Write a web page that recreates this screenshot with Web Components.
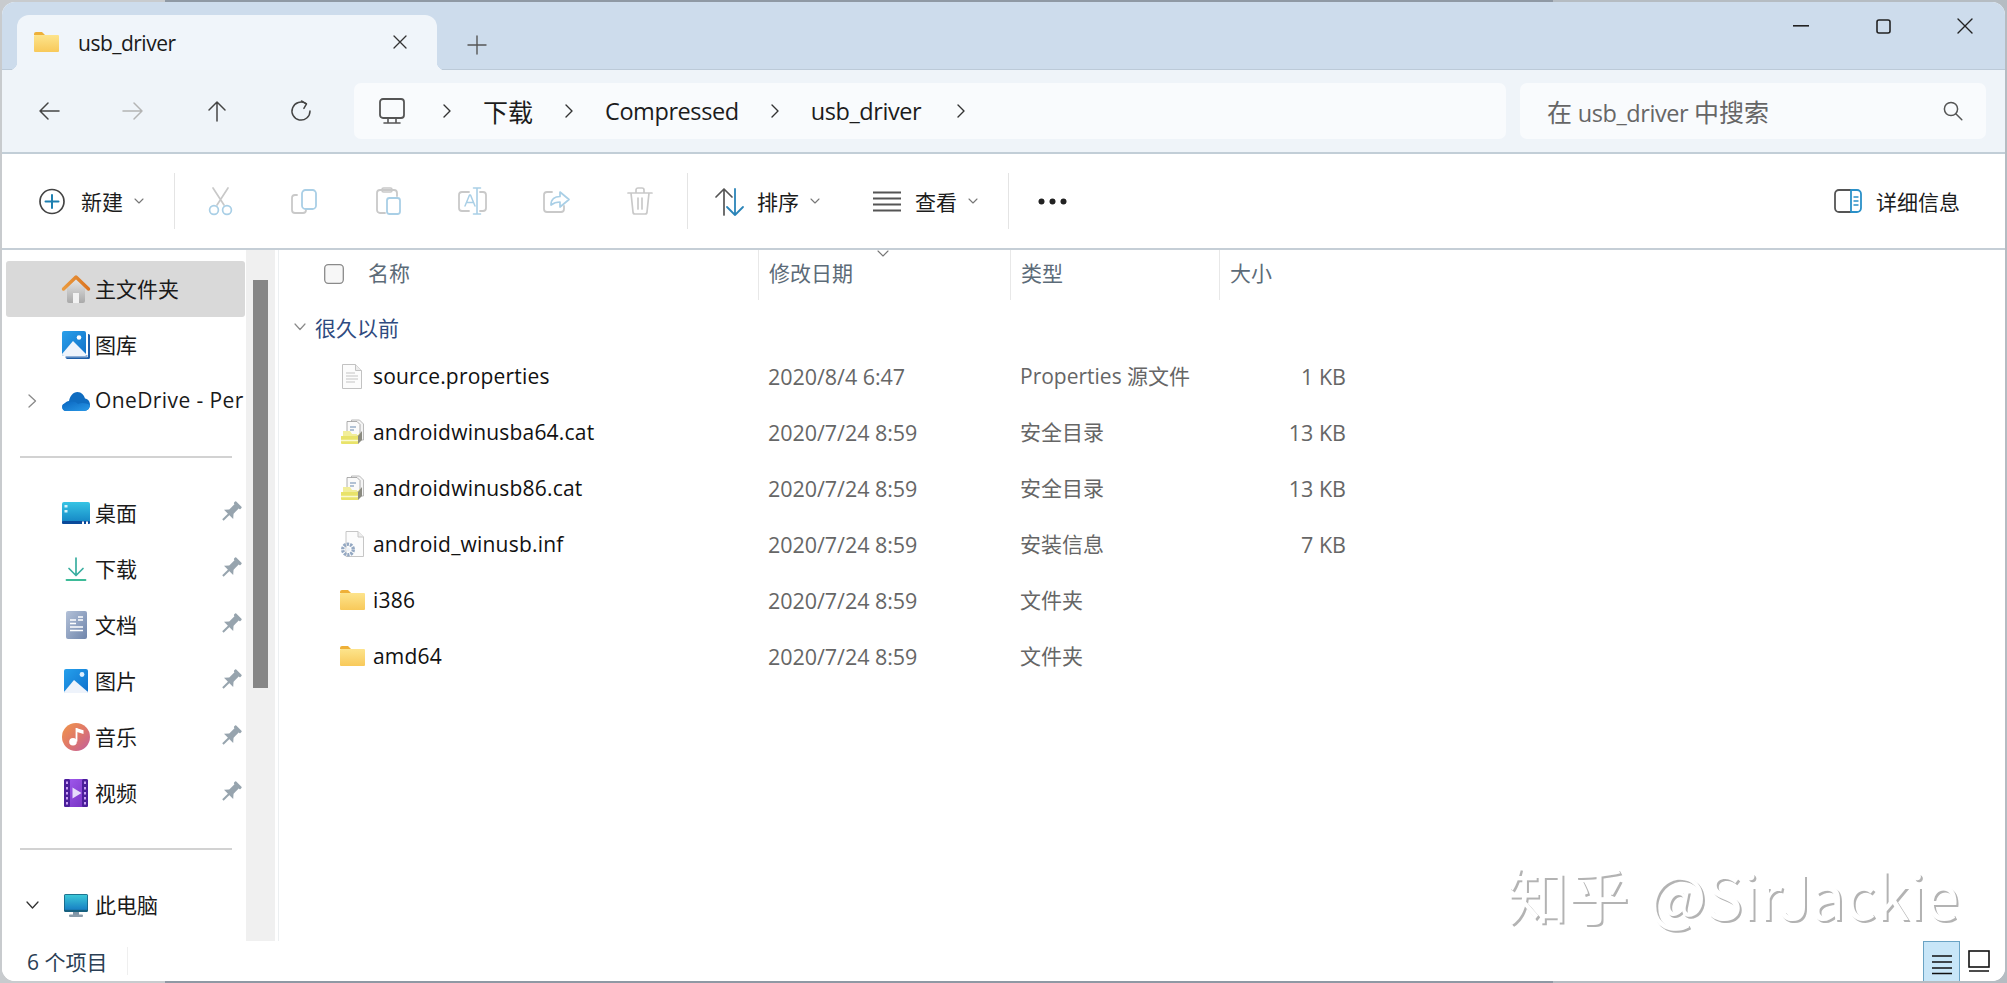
<!DOCTYPE html>
<html lang="zh-CN"><head><meta charset="utf-8"><title>usb_driver</title>
<style>
html,body{margin:0;padding:0;height:100%;overflow:hidden}
body{width:2007px;height:983px;box-sizing:border-box;padding:2px 2px 2px 2px;
background:linear-gradient(90deg,#c8cbce 0,#c8cbce 165px,#8f99a4 165px,#8f99a4 1553px,#b5bcc2 1553px);
font-family:"Open Sans","Noto Sans CJK SC",sans-serif;color:#1a1a1a}
</style></head><body>
<explorer-window>
  <tab-strip></tab-strip>
  <nav-bar></nav-bar>
  <tool-bar></tool-bar>
  <side-pane slot="body-left"></side-pane>
  <file-view slot="body-right"></file-view>
  <status-bar slot="status"></status-bar>
</explorer-window>
<script>
const stroke=(c,w)=>`fill="none" stroke="${c}" stroke-width="${w}" stroke-linecap="round" stroke-linejoin="round"`;
const G='#c9c9c9',B='#a9cfe6';
const ICONS={
folder:[25,20,`<defs><linearGradient id="f" x1="0" y1="0" x2="0" y2="1"><stop offset="0" stop-color="#fde48c"/><stop offset="1" stop-color="#f8c95a"/></linearGradient></defs><path d="M0 2a2 2 0 0 1 2-2h6l3 3h-11z" fill="#eeb038"/><rect y="3" width="25" height="17" rx="1" fill="url(#f)"/>`],
back:[22,20,`<path d="M21 10H2M10 2l-8 8 8 8" ${stroke('#444',1.5)}/>`],
forward:[22,20,`<path d="M1 10h19M12 2l8 8-8 8" ${stroke('#b4b4b4',1.5)}/>`],
up:[20,22,`<path d="M10 21V2M2 10l8-8 8 8" ${stroke('#444',1.5)}/>`],
refresh:[22,22,`<path d="M16 3.6A9 9 0 1 0 20 11" ${stroke('#444',1.5)}/><path d="M11.5 1l5 2.8-2.6 4.6" ${stroke('#444',1.5)}/>`],
monitor:[26,26,`<rect x="1" y="1" width="24" height="19" rx="3" ${stroke('#555',1.8)}/><path d="M9 20v4M17 20v4M5 25h16" ${stroke('#555',1.6)}/>`],
chev:[10,14,`<path d="M2 1l6 6-6 6" ${stroke('#333',1.4)}/>`],
search:[20,20,`<circle cx="8" cy="8" r="6.6" ${stroke('#555',1.5)}/><path d="M12.8 12.8l6 6" ${stroke('#555',1.5)}/>`],
min:[16,2,`<rect width="16" height="1.6" fill="#222"/>`],
max:[15,15,`<rect x="1" y="1" width="13" height="13" rx="2" ${stroke('#222',1.6)}/>`],
close:[16,16,`<path d="M1 1l14 14M15 1L1 15" ${stroke('#222',1.4)}/>`],
tabclose:[14,14,`<path d="M1 1l12 12M13 1L1 13" ${stroke('#333',1.3)}/>`],
plus:[18,18,`<path d="M9 0v18M0 9h18" ${stroke('#555',1.4)}/>`],
newc:[26,27,`<circle cx="13" cy="13.5" r="12" ${stroke('#444',1.7)}/><path d="M13 7v13M6.5 13.5h13" ${stroke('#1d7fb0',2)}/>`],
caret:[10,6,`<path d="M1 1l4 4 4-4" ${stroke('#777',1.1)}/>`],
cut:[25,28,`<path d="M5 1l11 17M20 1L9 18" ${stroke(G,1.7)}/><circle cx="6" cy="23" r="4.4" ${stroke(B,1.7)}/><circle cx="19" cy="23" r="4.4" ${stroke(B,1.7)}/>`],
copy:[26,25,`<path d="M6 6H4a3 3 0 0 0-3 3v12a3 3 0 0 0 3 3h8a3 3 0 0 0 3-3v-1" ${stroke(G,1.8)}/><rect x="11" y="1" width="14" height="19" rx="3.5" ${stroke(B,1.8)}/>`],
paste:[25,28,`<path d="M9 26H4a3 3 0 0 1-3-3V6a3 3 0 0 1 3-3h14a3 3 0 0 1 3 3v3" ${stroke(G,1.8)}/><rect x="6" y="1" width="10" height="4" rx="1.5" ${stroke(G,1.6)}/><rect x="11" y="11" width="13" height="16" rx="2.5" ${stroke(B,1.8)}/>`],
rename:[29,28,`<path d="M11 5H4a3 3 0 0 0-3 3v13a3 3 0 0 0 3 3h7M22 5h3a3 3 0 0 1 3 3v13a3 3 0 0 1-3 3h-3" ${stroke(G,1.8)}/><path d="M7 19l4.5-11h1L17 19M8.5 15.5h7" ${stroke(B,1.5)}/><path d="M19 1v26M15.5 1h7M15.5 27h7" ${stroke(B,1.6)}/>`],
share:[27,24,`<path d="M9 3H4a3 3 0 0 0-3 3v14a3 3 0 0 0 3 3h14a3 3 0 0 0 3-3v-3" ${stroke(G,1.8)}/><path d="M8 16c0-6 4-8.5 9-8.5V3l9 7.5-9 7.5v-5c-4 0-6.5 1-9 3z" ${stroke(B,1.7)}/>`],
trash:[26,28,`<path d="M1 6h24M9 6V3a2 2 0 0 1 2-2h4a2 2 0 0 1 2 2v3M4 6l2 19a2 2 0 0 0 2 2h10a2 2 0 0 0 2-2l2-19M11 11v11M15 11v11" ${stroke(G,1.7)}/>`],
sort:[29,29,`<path d="M9 28V2M1 10l8-8 8 8" ${stroke('#555',1.7)}/><path d="M20 2v26M12 20l8 8 8-8" ${stroke('#2a84b8',1.8)}/>`],
view:[28,21,`<path d="M0 1.5h28M0 7.5h28M0 13.5h28M0 19.5h28" fill="none" stroke="#555" stroke-width="1.9"/>`],
dots:[29,7,`<circle cx="3.5" cy="3.5" r="3" fill="#222"/><circle cx="14.5" cy="3.5" r="3" fill="#222"/><circle cx="25.5" cy="3.5" r="3" fill="#222"/>`],
details:[28,24,`<path d="M17 1H5a4 4 0 0 0-4 4v14a4 4 0 0 0 4 4h12" ${stroke('#555',1.8)}/><path d="M17 1h6a4 4 0 0 1 4 4v14a4 4 0 0 1-4 4h-6z" ${stroke('#2a90c8',1.8)}/><path d="M20 8h4M20 12h4M20 16h4" ${stroke('#2a90c8',1.4)}/>`],
home:[28,28,`<defs><linearGradient id="b" x1="0" y1="0" x2="0" y2="1"><stop offset="0" stop-color="#e4e4e4"/><stop offset="1" stop-color="#a9a9a9"/></linearGradient><linearGradient id="r" x1="0" y1="0" x2="1" y2="0"><stop offset="0" stop-color="#ea9a3e"/><stop offset="1" stop-color="#db7420"/></linearGradient></defs><path d="M5 13 14 5l9 8v13a2 2 0 0 1-2 2H7a2 2 0 0 1-2-2z" fill="url(#b)"/><rect x="11" y="18" width="6" height="10" fill="#f2f2f2"/><path d="M1.5 14 14 2l12.5 12" fill="none" stroke="url(#r)" stroke-width="3.4" stroke-linecap="round" stroke-linejoin="round"/>`],
gallery:[28,28,`<defs><linearGradient id="g" x1="0" y1="0" x2="1" y2="1"><stop offset="0" stop-color="#2aa0ea"/><stop offset="1" stop-color="#1070c8"/></linearGradient></defs><path d="M26 3h.5A1.5 1.5 0 0 1 28 4.5v22a1.5 1.5 0 0 1-1.5 1.5h-21a2 2 0 0 1-2-2h22.5z" fill="#1e5ea8"/><rect x="3.5" y="24" width="22" height="2.5" fill="#8fb0d8"/><rect width="24" height="25" rx="2" fill="url(#g)"/><path d="M0 23 11 10l13 13v1a1 1 0 0 1-1 1H2a2 2 0 0 1-2-2z" fill="#eef4fc"/><circle cx="17" cy="6.5" r="2.3" fill="#fff"/>`],
cloud:[28,19,`<defs><linearGradient id="c" x1="0" y1="0" x2="1" y2="1"><stop offset="0" stop-color="#0a66c0"/><stop offset="1" stop-color="#2a9ae8"/></linearGradient></defs><path d="M4 19a4 4 0 0 1-1-7.8C4 10 5 9 7 9 8 4 11 0 15.5 0 19.5 0 22 3 23 6.5c3 .3 5 3 5 6.3A6 6 0 0 1 22 19z" fill="#0f6cc0"/><path d="M4 19a4 4 0 0 1-1-7.8c4-2 10-3 13 .8 4-2 8-1 12 .8A6 6 0 0 1 22 19z" fill="url(#c)"/>`],
desktop:[28,22,`<defs><linearGradient id="d" x1="0" y1="0" x2="0" y2="1"><stop offset="0" stop-color="#36c4e4"/><stop offset="1" stop-color="#1484c4"/></linearGradient></defs><rect width="28" height="21" rx="2" fill="url(#d)"/><rect y="19" width="28" height="3" rx="1" fill="#0a4a9a"/><rect x="2.5" y="3" width="3" height="2.5" fill="#d8f4fc"/><rect x="2.5" y="8" width="3" height="2.5" fill="#d8f4fc"/><rect x="20" y="19.5" width="2" height="2.5" fill="#fff"/><rect x="24" y="19.5" width="2" height="2.5" fill="#fff"/>`],
download:[20,24,`<path d="M10 1v17M3 11.5l7 7 7-7" ${stroke('#3aaea0',1.7)}/><path d="M.5 23h19" ${stroke('#3dbb98',1.8)}/>`],
doc:[21,28,`<defs><linearGradient id="o" x1="0" y1="0" x2="1" y2="1"><stop offset="0" stop-color="#b3c1d8"/><stop offset="1" stop-color="#6f85ab"/></linearGradient></defs><rect width="21" height="28" rx="2" fill="url(#o)"/><path d="M4 9h6M4 12.5h6M12 9h5M12 6h5M4 16h13M4 19.5h13" stroke="#fff" stroke-width="1.7"/>`],
pictures:[24,24,`<defs><linearGradient id="p" x1="0" y1="0" x2="1" y2="1"><stop offset="0" stop-color="#25a0ec"/><stop offset="1" stop-color="#0f70cc"/></linearGradient></defs><rect width="24" height="24" rx="2" fill="url(#p)"/><path d="M0 23 10 11l14 12a1 1 0 0 1-1 1H1a1 1 0 0 1-1-1z" fill="#eef3fb"/><circle cx="18" cy="5.5" r="2.4" fill="#dff0ff"/>`],
music:[28,28,`<defs><linearGradient id="m" x1="0" y1="0" x2="1" y2="1"><stop offset="0" stop-color="#f0964a"/><stop offset=".5" stop-color="#e07868"/><stop offset="1" stop-color="#c05ea0"/></linearGradient></defs><circle cx="14" cy="14" r="14" fill="url(#m)"/><path d="M14.5 5v13.5" stroke="#fff" stroke-width="1.8"/><path d="M15 5.2l6.5 2v3.8L15 9z" fill="#fff"/><circle cx="11" cy="18.8" r="3.8" fill="#fff"/>`],
video:[24,28,`<defs><linearGradient id="v" x1="0" y1="0" x2="1" y2="1"><stop offset="0" stop-color="#a35cf0"/><stop offset="1" stop-color="#7430c0"/></linearGradient></defs><rect width="24" height="28" rx="2" fill="url(#v)"/><rect width="6" height="28" rx="1.5" fill="#4a1e9a"/><rect x="18" width="6" height="28" rx="1.5" fill="#4a1e9a"/><path d="M2 2.5h2V5H2zM2 8h2v2.5H2zM2 13h2v2.5H2zM2 18h2v2.5H2zM2 23h2v2.5H2zM20 2.5h2V5h-2zM20 8h2v2.5h-2zM20 13h2v2.5h-2zM20 18h2v2.5h-2zM20 23h2v2.5h-2z" fill="#c9a0f4"/><path d="M8.5 8.5v11l9-5.5z" fill="#e6dcfb"/>`],
pc:[24,23,`<defs><linearGradient id="q" x1="0" y1="0" x2="0" y2="1"><stop offset="0" stop-color="#3cc8d8"/><stop offset="1" stop-color="#1880c4"/></linearGradient></defs><rect x="9" y="16" width="6" height="5" fill="#7f95a6"/><rect x="5" y="20.5" width="14" height="2.5" rx="1" fill="#8a9cab"/><rect width="24" height="18" rx="1.5" fill="#16607f"/><rect x=".8" y=".8" width="22.4" height="15" fill="url(#q)"/>`],
pin:[18,18,`<g transform="rotate(45 9 9)" fill="#97a4ae"><rect x="4.5" y="-3.5" width="9" height="3" rx=".8"/><rect x="6" y="-1" width="6" height="9"/><path d="M6 7h6l3.5 4h-13z"/><rect x="8" y="10" width="2" height="9"/></g>`],
sidechev:[9,14,`<path d="M1 1l6.5 6L1 13" ${stroke('#8a8a8a',1.3)}/>`],
sideopen:[13,8,`<path d="M1 1l5.5 6L12 1" ${stroke('#333',1.3)}/>`],
groupchev:[12,8,`<path d="M1 1l5 5.5L11 1" ${stroke('#8a8a8a',1.2)}/>`],
sortcaret:[12,7,`<path d="M1 1l5 5 5-5" ${stroke('#777',1.1)}/>`],
txt:[20,25,`<path d="M.5.5h13l6 6v18h-19z" fill="#fcfcfc" stroke="#c2c2c2"/><path d="M13.5.5v6h6" fill="#ececec" stroke="#c2c2c2"/><path d="M4 9h9M4 12h12M4 15h12M4 18h9" stroke="#c4c4c4" stroke-width="1"/>`],
cat:[23,24,`<path d="M10.5 0h8l4 4v16h-12z" fill="#f4f4f4" stroke="#aaa" stroke-width=".8"/><path d="M6 1.5h10l3 3V16H6z" fill="#fafafa" stroke="#999" stroke-width=".8"/><path d="M9 7h6M9 10h4" stroke="#6a8ab0" stroke-width="1.2"/><path d="M2 11h7l2 3h5l-1 4H2z" fill="#f2ee9a"/><path d="M0 16h16l3-3v8l-2 3H1a1 1 0 0 1-1-1z" fill="#e9e36a"/><path d="M0 20.5h17" stroke="#fafad0" stroke-width="1.5"/><path d="M17 16l4-5v9l-4 4z" fill="#8a8a80"/>`],
inf:[23,26,`<path d="M5 .5h12l5.5 5.5v19.5H5z" fill="#fcfcfc" stroke="#c6c6c6"/><path d="M17 .5V6h5.5" fill="#eee" stroke="#c6c6c6"/><circle cx="7" cy="18.5" r="5.3" fill="none" stroke="#94a8c2" stroke-width="3.4" stroke-dasharray="2.3 1"/><circle cx="7" cy="18.5" r="2" fill="#eef2f7"/>`],
check:[20,20,`<rect x=".7" y=".7" width="18.6" height="18.6" rx="3.5" fill="#f7f7f7" stroke="#8a8a8a" stroke-width="1.3"/>`],
listv:[20,20,`<path d="M0 2h20M0 8h20M0 14h20M0 19.5h20" fill="none" stroke="#111" stroke-width="1.6"/>`],
tilev:[22,22,`<rect x="1" y="1" width="20" height="16" fill="none" stroke="#111" stroke-width="1.6"/><path d="M1 21h20" stroke="#111" stroke-width="1.6"/>`]
};
class AppIcon extends HTMLElement{
  connectedCallback(){
    if(this.shadowRoot)return;
    const [w,h,body]=ICONS[this.getAttribute('name')];
    const r=this.attachShadow({mode:'open'});
    r.innerHTML=`<style>:host{display:block;flex:none;width:${w}px;height:${h}px;line-height:0}svg{display:block;overflow:visible}</style><svg width="${w}" height="${h}" viewBox="0 0 ${w} ${h}" aria-hidden="true">${body}</svg>`;
  }
}
customElements.define('app-icon',AppIcon);
function shell(el,html){const r=el.attachShadow({mode:'open'});r.innerHTML=html;return r;}

class ExplorerWindow extends HTMLElement{constructor(){super();shell(this,`<style>
:host{display:flex;flex-direction:column;position:relative;width:2003px;height:979px;background:#fff;border-radius:13px;overflow:hidden}
.body{flex:1;display:flex;min-height:0}
.wm{position:absolute;left:1505px;top:857px;font:400 61px/70px "Noto Sans CJK SC",sans-serif;color:#fff;text-shadow:2px 2px 0 #b3b3b3;white-space:nowrap}
.wm span{letter-spacing:-.3px;margin-left:6px}
</style><slot></slot><div class="body"><slot name="body-left"></slot><slot name="body-right"></slot></div><slot name="status"></slot><div class="wm">知乎 <span>@SirJackie</span></div>`);}}
customElements.define('explorer-window',ExplorerWindow);

class TabStrip extends HTMLElement{constructor(){super();shell(this,`<style>
:host{display:flex;align-items:flex-end;height:68px;box-sizing:border-box;background:#cddcec;border-bottom:1px solid #bccad8;padding-left:15px;flex:none;position:relative}
.tab{position:relative;display:flex;align-items:center;width:420px;height:55px;margin-bottom:-1px;background:#f0f5fa;border-radius:12px 12px 0 0;box-sizing:border-box;padding:1px 0 0 17px}
.tab::before,.tab::after{content:"";position:absolute;bottom:0;width:8px;height:8px}
.tab::before{left:-8px;background:radial-gradient(circle at 0 0,transparent 8px,#f0f5fa 8.5px)}
.tab::after{right:-8px;background:radial-gradient(circle at 100% 0,transparent 8px,#f0f5fa 8.5px)}
.f{margin-top:-3px}
.t{margin-left:19px;font-size:21px;letter-spacing:-.5px;color:#1a1a1a;flex:1}
.x{margin-right:30px;margin-top:-3px}
.plus{margin:0 0 15px 31px}
.wc{position:absolute;top:16px;right:32px;display:flex;align-items:center}
.wc app-icon:nth-child(2){margin-left:67px}
.wc app-icon:nth-child(3){margin-left:66px}
</style><div class="tab"><app-icon class="f" name="folder"></app-icon><span class="t">usb_driver</span><app-icon class="x" name="tabclose"></app-icon></div><app-icon class="plus" name="plus"></app-icon><div class="wc"><app-icon name="min"></app-icon><app-icon name="max"></app-icon><app-icon name="close"></app-icon></div>`);}}
customElements.define('tab-strip',TabStrip);

class NavBar extends HTMLElement{constructor(){super();shell(this,`<style>
:host{display:flex;align-items:center;height:84px;box-sizing:border-box;background:#eff4f9;border-bottom:2px solid #c2ced7;padding:0 19px 0 5px;flex:none}
.b{width:84px;display:flex;justify-content:center}
.addr{margin-left:11px;width:1152px;height:56px;background:#f9fbfd;border-radius:7px;display:flex;align-items:center;padding-left:25px;box-sizing:border-box;font-size:23.5px;letter-spacing:-.42px;gap:31px;color:#1c1c1c}
.addr app-icon:nth-child(2){margin-left:6px}
.addr app-icon:last-child{margin-left:4px}
.cjk{font-size:25px;letter-spacing:0}
.search{margin-left:14px;width:466px;height:56px;background:#f9fbfd;border-radius:7px;display:flex;align-items:center;padding:0 23px 0 27px;box-sizing:border-box;font-size:23.5px;letter-spacing:-.42px;color:#666;justify-content:space-between}
</style><div class="b"><app-icon name="back"></app-icon></div><div class="b"><app-icon name="forward"></app-icon></div><div class="b"><app-icon name="up"></app-icon></div><div class="b"><app-icon name="refresh"></app-icon></div>
<div class="addr"><app-icon name="monitor"></app-icon><app-icon name="chev"></app-icon><span class="cjk">下载</span><app-icon name="chev"></app-icon><span>Compressed</span><app-icon name="chev"></app-icon><span>usb_driver</span><app-icon name="chev"></app-icon></div>
<div class="search"><span><span class="cjk">在</span> usb_driver <span class="cjk">中搜索</span></span><app-icon name="search"></app-icon></div>`);}}
customElements.define('nav-bar',NavBar);

class ToolBar extends HTMLElement{constructor(){super();shell(this,`<style>
:host{display:flex;align-items:center;height:96px;box-sizing:border-box;background:#fff;border-bottom:2px solid #c5ced6;padding:0 45px 0 37px;flex:none;font-size:21px;color:#1c1c1c}
.g{display:flex;align-items:center}
.sep{width:1px;height:56px;background:#e4e4e4;flex:none}
.ib{width:84px;display:flex;justify-content:center}
.t{margin-left:16px}.c{margin-left:11px}
.g2 .t{margin-left:13px}
</style><div class="g"><app-icon name="newc"></app-icon><span class="t">新建</span><app-icon class="c" name="caret"></app-icon></div>
<div class="sep" style="margin:0 3px 0 30px"></div>
<div class="ib"><app-icon name="cut"></app-icon></div><div class="ib"><app-icon name="copy"></app-icon></div><div class="ib"><app-icon name="paste"></app-icon></div><div class="ib"><app-icon name="rename"></app-icon></div><div class="ib"><app-icon name="share"></app-icon></div><div class="ib"><app-icon name="trash"></app-icon></div>
<div class="sep" style="margin:0 27px 0 5px"></div>
<div class="g g2"><app-icon name="sort"></app-icon><span class="t">排序</span><app-icon class="c" name="caret"></app-icon></div>
<div class="g g2" style="margin-left:53px"><app-icon name="view"></app-icon><span class="t" style="margin-left:14px">查看</span><app-icon class="c" name="caret"></app-icon></div>
<div class="sep" style="margin:0 29px 0 30px"></div>
<app-icon name="dots"></app-icon>
<div class="g" style="margin-left:auto"><app-icon name="details"></app-icon><span class="t" style="margin-left:14px">详细信息</span></div>`);}}
customElements.define('tool-bar',ToolBar);

class NavItem extends HTMLElement{
connectedCallback(){ if(this.shadowRoot)return;
const ex=this.getAttribute('expand');
shell(this,`<style>
:host{display:flex;align-items:center;height:56px;width:239px;box-sizing:border-box;border-radius:3px;font-size:21px;color:#1a1a1a;white-space:nowrap;overflow:hidden}
:host([selected]){background:#d9d9d9}
.e{width:56px;flex:none;display:flex;padding-left:${ex==='sidechev'?22:20}px;box-sizing:border-box}
.i{width:28px;display:flex;justify-content:center;flex:none}
.t{margin-left:5px;flex:1;padding-bottom:2px}
.p{margin-right:6px}
</style><div class="e">${ex?`<app-icon name="${ex}"></app-icon>`:''}</div><div class="i"><app-icon name="${this.getAttribute('icon')}"></app-icon></div><span class="t"><slot></slot></span>${this.hasAttribute('pinned')?'<app-icon class="p" name="pin"></app-icon>':''}`);
}}
customElements.define('nav-item',NavItem);

class SidePane extends HTMLElement{constructor(){super();shell(this,`<style>
:host{display:flex;width:276px;height:100%;flex:none;background:#fff}
.list{width:244px;box-sizing:border-box;padding:11px 0 0 4px;overflow:hidden}
.d{height:2px;background:#d2d2d2;margin:27px 0 27px 14px;width:212px}
.track{width:29px;background:#f0f0f0;padding-left:7px;box-sizing:border-box;flex:none}
.thumb{width:15px;height:408px;margin-top:30px;background:#868686}
.ol{letter-spacing:.4px}
</style><div class="list">
<nav-item icon="home" selected>主文件夹</nav-item>
<nav-item icon="gallery">图库</nav-item>
<nav-item icon="cloud" expand="sidechev"><span class="ol">OneDrive - Per</span></nav-item>
<div class="d"></div>
<nav-item icon="desktop" pinned>桌面</nav-item>
<nav-item icon="download" pinned>下载</nav-item>
<nav-item icon="doc" pinned>文档</nav-item>
<nav-item icon="pictures" pinned>图片</nav-item>
<nav-item icon="music" pinned>音乐</nav-item>
<nav-item icon="video" pinned>视频</nav-item>
<div class="d"></div>
<nav-item icon="pc" expand="sideopen">此电脑</nav-item>
</div><div class="track"><div class="thumb"></div></div>`);}}
customElements.define('side-pane',SidePane);

const COLS='480px 252px 209px 141px';
class FileRow extends HTMLElement{
connectedCallback(){ if(this.shadowRoot)return; const g=n=>this.getAttribute(n)||'';shell(this,`<style>
:host{display:grid;grid-template-columns:${COLS};height:56px;box-sizing:border-box;padding-bottom:2px;align-items:center;font-size:21px;color:#666}
.n{display:flex;align-items:center;padding-left:60px;color:#111;letter-spacing:.2px}
.ib{width:28px;display:flex;justify-content:center;margin-right:7px}
.d{padding-left:10px;font-size:21.5px;letter-spacing:-.05px}.ty{padding:0 0 2px 10px;font-size:21px}
.s{text-align:right;padding-right:14px;font-size:21.5px}
</style><div class="n"><div class="ib"><app-icon name="${g('icon')}"></app-icon></div><span>${g('file')}</span></div><div class="d">${g('date')}</div><div class="ty">${g('type')}</div><div class="s">${g('size')}</div>`);}}
customElements.define('file-row',FileRow);

class FileView extends HTMLElement{constructor(){super();shell(this,`<style>
:host{display:block;flex:1;height:100%;box-shadow:inset 1px 0 #eceff1;min-width:0}
.h{display:grid;grid-template-columns:${COLS};height:50px;font-size:21px;color:#5c6b78;position:relative}
.h>div{border-left:1px solid #e8e8e8;padding:0 0 6px 10px;display:flex;align-items:center;box-sizing:border-box;height:50px}
.h>div:first-child{border-left:none;padding-left:46px}
.h>div:last-child{border-right:1px solid #e8e8e8;width:142px}
.h .nm{margin-left:24px}
.h app-icon[name=check]{margin-top:3px}
.sc{position:absolute;left:599px;top:0}
.g{display:flex;align-items:center;height:34px;margin:10px 0 5px;padding-left:16px;font-size:21px;color:#2f4b80}
.g span{margin-left:9px;padding-bottom:1px}
</style><div class="h"><div><app-icon name="check"></app-icon><span class="nm">名称</span></div><div>修改日期</div><div>类型</div><div>大小</div><app-icon class="sc" name="sortcaret"></app-icon></div>
<div class="g"><app-icon name="groupchev"></app-icon><span>很久以前</span></div>
<file-row icon="txt" file="source.properties" date="2020/8/4 6:47" type="Properties 源文件" size="1 KB"></file-row>
<file-row icon="cat" file="androidwinusba64.cat" date="2020/7/24 8:59" type="安全目录" size="13 KB"></file-row>
<file-row icon="cat" file="androidwinusb86.cat" date="2020/7/24 8:59" type="安全目录" size="13 KB"></file-row>
<file-row icon="inf" file="android_winusb.inf" date="2020/7/24 8:59" type="安装信息" size="7 KB"></file-row>
<file-row icon="folder" file="i386" date="2020/7/24 8:59" type="文件夹"></file-row>
<file-row icon="folder" file="amd64" date="2020/7/24 8:59" type="文件夹"></file-row>`);}}
customElements.define('file-view',FileView);

class StatusBar extends HTMLElement{constructor(){super();shell(this,`<style>
:host{display:flex;align-items:center;height:40px;flex:none;background:#fff;padding-left:25px;font-size:21px;color:#2b3f55;position:relative}
.sep{width:1px;height:28px;background:#efefef;margin-left:20px}
.v{margin-left:auto;display:flex;align-items:flex-start;height:40px;margin-right:15px}
.on{width:37px;height:40px;box-sizing:border-box;background:#c8e6f8;border:1px solid #6aa3c4;border-bottom:none;display:flex;align-items:center;justify-content:center;padding-top:4px}
.off{margin:9px 0 0 8px}
</style><span>6 个项目</span><div class="sep"></div><div class="v"><div class="on"><app-icon name="listv"></app-icon></div><app-icon class="off" name="tilev"></app-icon></div>`);}}
customElements.define('status-bar',StatusBar);
</script>
</body></html>
